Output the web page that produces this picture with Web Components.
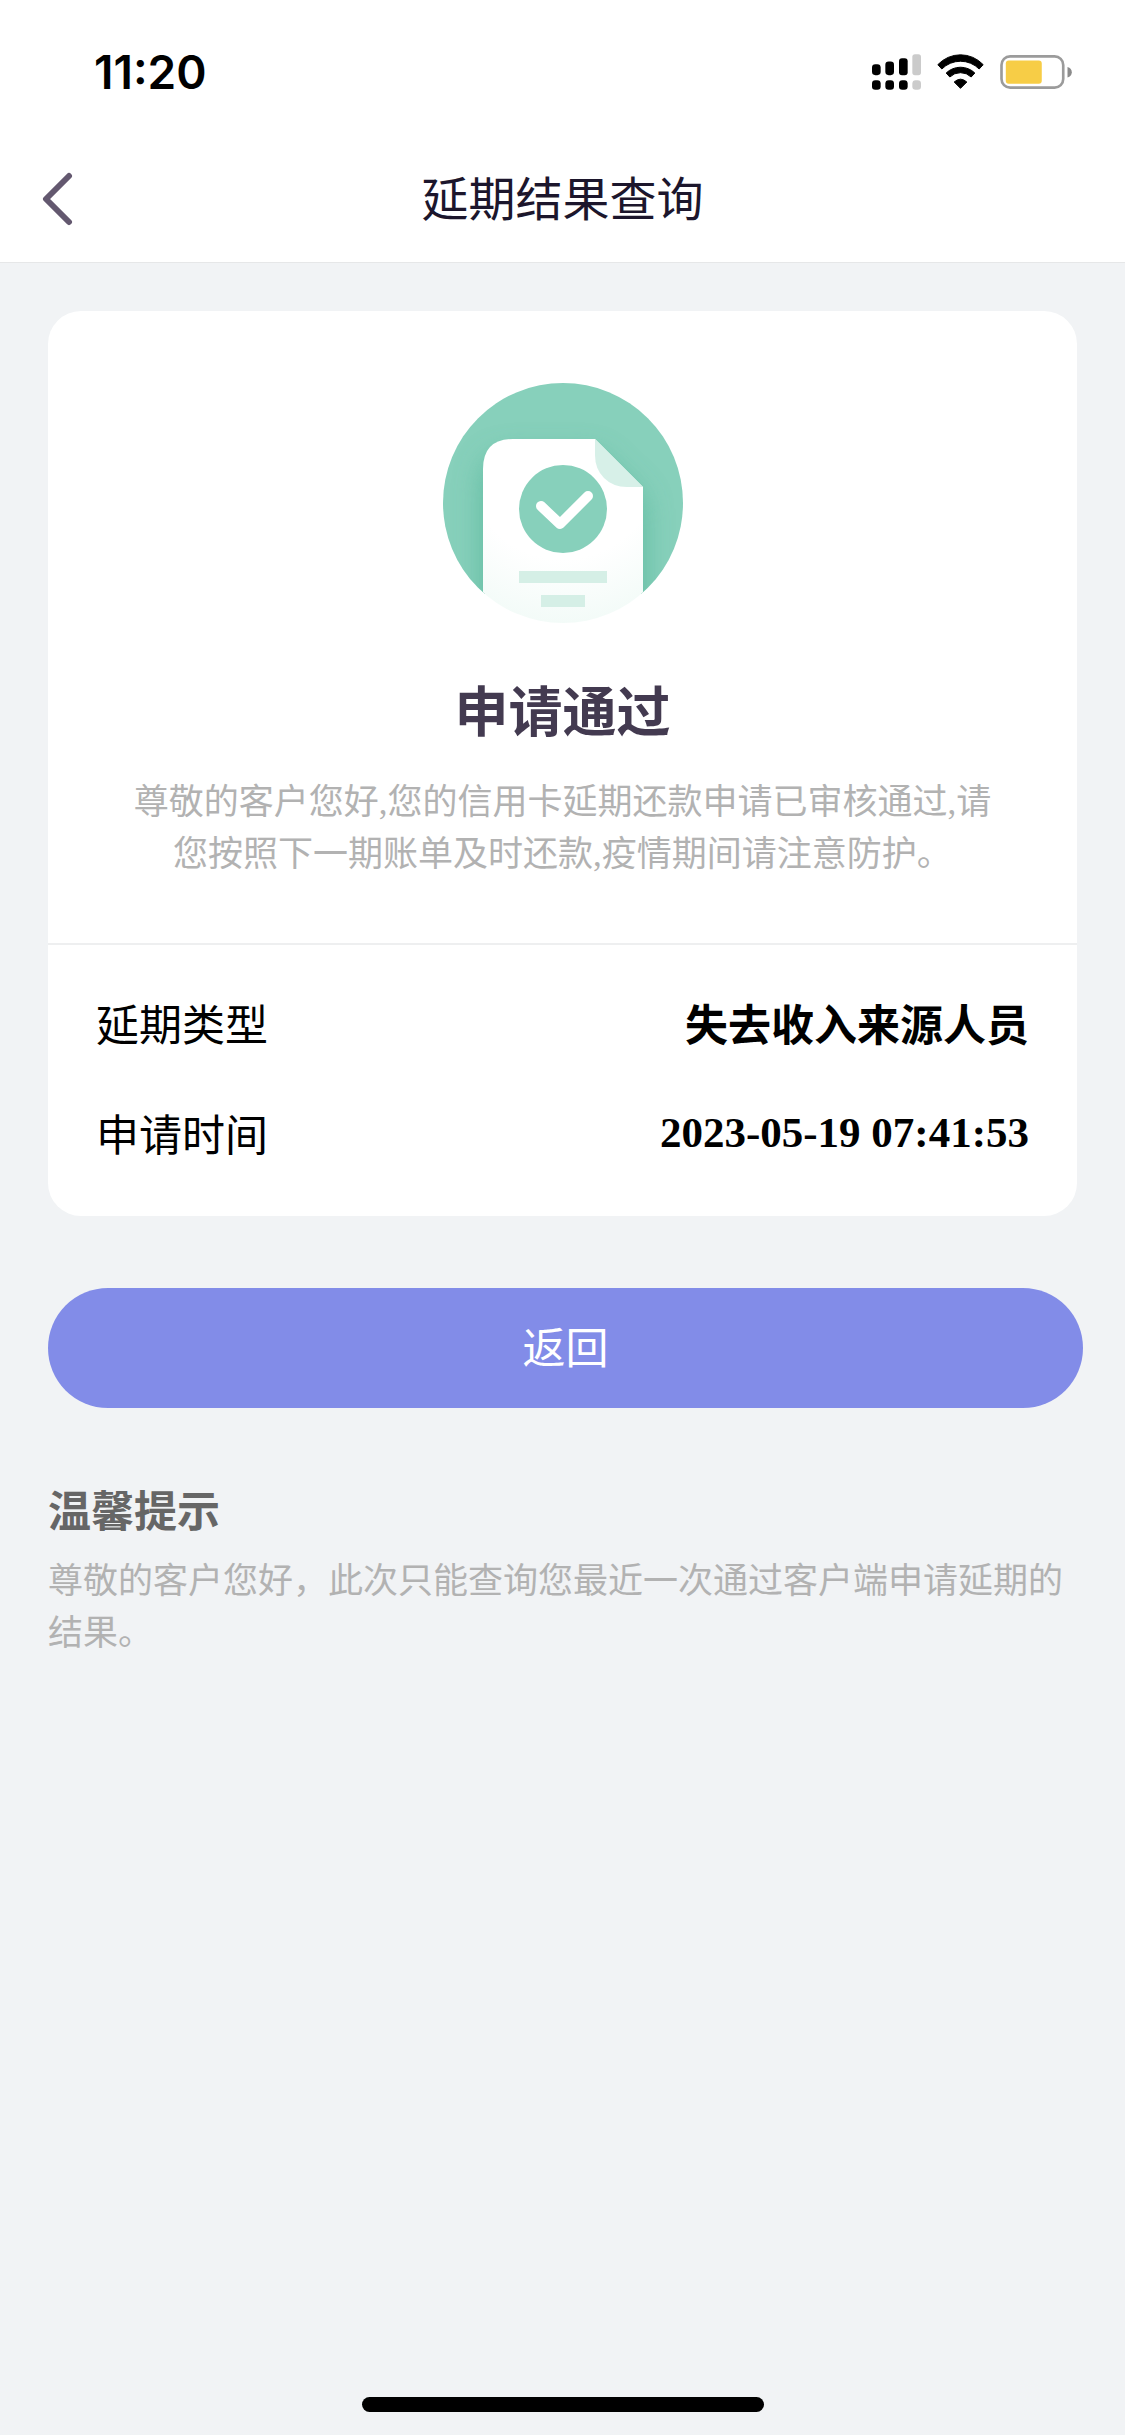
<!DOCTYPE html>
<html lang="zh-CN">
<head>
<meta charset="utf-8">
<meta name="viewport" content="width=device-width, initial-scale=1">
<title>延期结果查询</title>
<style>
  body {
    margin: 0;
    background: #f1f3f5;
    --sans: "Noto Sans CJK SC", sans-serif;
    --mixed: "Liberation Serif", "Noto Sans CJK SC", serif;
    font-family: var(--sans);
    color: #000;
  }
</style>
</head>
<body>
<result-page>
  <status-bar slot="top" time="11:20"></status-bar>
  <nav-bar slot="top">延期结果查询</nav-bar>
  <result-card heading="申请通过">
    尊敬的客户您好,您的信用卡延期还款申请已审核通过,请您按照下一期账单及时还款,疫情期间请注意防护。
    <detail-row slot="details" label="延期类型">失去收入来源人员</detail-row>
    <detail-row slot="details" label="申请时间">2023-05-19 07:41:53</detail-row>
  </result-card>
  <pill-button>返回</pill-button>
  <tip-note heading="温馨提示">尊敬的客户您好，此次只能查询您最近一次通过客户端申请延期的结果。</tip-note>
</result-page>

<script>
const define = (name, render) => customElements.define(name, class extends HTMLElement {
  constructor() {
    super();
    this.attachShadow({ mode: "open" }).innerHTML = render(this);
  }
});

define("result-page", () => `
  <style>
    :host { display: flex; flex-direction: column; min-height: 100vh; }
    header { background: #fff; border-bottom: 1px solid #e6e7e8; }
    main { flex: 1; padding: 48px; }
    footer { display: flex; justify-content: center; padding-bottom: 23px; }
    .indicator { width: 402px; height: 15px; border-radius: 8px; background: #000; }
  </style>
  <header><slot name="top"></slot></header>
  <main><slot></slot></main>
  <footer><div class="indicator"></div></footer>
`);

define("status-bar", el => `
  <style>
    :host { display: flex; align-items: center; justify-content: space-between;
            box-sizing: border-box; height: 136px; padding: 7px 53px 0 94px; }
    time { font: 600 46px/56px Inter, sans-serif; }
    .icons { display: flex; align-items: center; gap: 16px; }
    svg { display: block; }
  </style>
  <time>${el.getAttribute("time")}</time>
  <div class="icons">
    <svg width="49" height="36" viewBox="0 0 147 107" aria-hidden="true">
      <rect x="0" y="30" width="26" height="33" rx="10"/>
      <rect x="40" y="22" width="26" height="41" rx="10"/>
      <rect x="81" y="12" width="26" height="51" rx="9"/>
      <rect x="121" y="0" width="26" height="63" rx="8" fill="#cbcbcb"/>
      <rect x="0" y="78" width="26" height="29" rx="10"/>
      <rect x="40" y="78" width="26" height="29" rx="10"/>
      <rect x="81" y="78" width="26" height="29" rx="10"/>
      <rect x="121" y="78" width="26" height="29" rx="10" fill="#cbcbcb"/>
    </svg>
    <svg width="47" height="35" viewBox="0 0 140 105" stroke="#000" stroke-width="3" stroke-linejoin="round" aria-hidden="true">
      <path d="M2 32A93 93 0 0 1 138 32L126 45A79 79 0 0 0 14 45Z"/>
      <path d="M27 57A62 62 0 0 1 113 57L102 69A46 46 0 0 0 38 69Z"/>
      <path d="M51 84Q70 67 89 84L70 103Z"/>
    </svg>
    <svg width="72" height="34" viewBox="0 0 217 103" aria-hidden="true">
      <rect x="4" y="4" width="187" height="95" rx="26" fill="none" stroke="#9b9b9b" stroke-width="8"/>
      <rect x="17" y="17" width="109" height="70" rx="9" fill="#f7cd46"/>
      <path d="M204 36Q217 40 217 52T204 68Z" fill="#8b8b8b"/>
    </svg>
  </div>
`);

define("nav-bar", () => `
  <style>
    :host { display: grid; grid-template-columns: 120px 1fr 120px; align-items: center; height: 126px; }
    button { justify-self: start; padding: 24px 42px; border: 0; background: none; }
    svg { display: block; }
    h1 { margin: 0; padding-bottom: 6px; text-align: center; font-size: 47px; font-weight: 400; line-height: 60px; color: #1c162c; }
  </style>
  <button type="button" aria-label="返回上一页">
    <svg width="31" height="54" viewBox="0 0 31 54" fill="none" stroke="#63586f" stroke-width="6" stroke-linecap="round" stroke-linejoin="round">
      <path d="M27 4L4 27L27 50"/>
    </svg>
  </button>
  <h1><slot></slot></h1>
`);

define("approved-badge", () => `
  <style>:host { display: block; } svg { display: block; }</style>
  <svg width="240" height="240" viewBox="0 0 240 240" role="img" aria-label="已通过">
    <defs>
      <clipPath id="disc"><circle cx="120" cy="120" r="120"/></clipPath>
      <clipPath id="back"><rect width="240" height="211"/></clipPath>
      <filter id="soft" x="-40%" y="-40%" width="180%" height="180%"><feGaussianBlur stdDeviation="15"/></filter>
      <radialGradient id="paper" gradientUnits="userSpaceOnUse" cx="120" cy="80" r="160">
        <stop offset=".6" stop-color="#fff"/><stop offset="1" stop-color="#f3fbf8"/>
      </radialGradient>
    </defs>
    <g clip-path="url(#disc)">
      <g clip-path="url(#back)">
        <rect width="240" height="240" fill="#87d0bb"/>
        <path d="M40 280V102Q40 72 70 72H152L200 118V280Z" fill="#4fb397" opacity=".75" filter="url(#soft)"/>
      </g>
      <path d="M40 240V86Q40 56 70 56H152L200 104V240Z" fill="url(#paper)"/>
      <path d="M152 56V72Q152 86 161 95T184 104H200Z" fill="#d7f0e8"/>
      <circle cx="120" cy="126" r="44" fill="#87d0bb"/>
      <path d="M98 123L117 141L145 113" fill="none" stroke="#fff" stroke-width="10" stroke-linecap="round" stroke-linejoin="round"/>
      <rect x="76" y="188" width="88" height="12" fill="#d5efe6"/>
      <rect x="98" y="212" width="44" height="12" fill="#d5efe6"/>
    </g>
  </svg>
`);

define("result-card", el => `
  <style>
    :host { display: block; background: #fff; border-radius: 33px; }
    .summary { display: flex; flex-direction: column; align-items: center;
               padding: 72px 72px 62px; border-bottom: 2px solid #eeeff0; }
    h2 { margin: 56px 0 38px; font-size: 54px; line-height: 60px; font-weight: 700; color: #433a50; }
    p { margin: 0; text-align: center; font: 35px/52px var(--mixed); color: #b2b2b2; }
    .details { display: flex; flex-direction: column; gap: 48px; padding: 46px 48px 53px; }
  </style>
  <section class="summary">
    <approved-badge></approved-badge>
    <h2>${el.getAttribute("heading")}</h2>
    <p><slot></slot></p>
  </section>
  <section class="details"><slot name="details"></slot></section>
`);

define("detail-row", el => `
  <style>
    :host { display: flex; align-items: center; justify-content: space-between; font-size: 43px; }
    .value { font-family: var(--mixed); font-weight: 700; }
  </style>
  <span>${el.getAttribute("label")}</span>
  <span class="value"><slot></slot></span>
`);

define("pill-button", () => `
  <style>
    :host { display: block; margin: 72px -6px 0 0; }
    button { display: block; width: 100%; height: 120px; border: 0; border-radius: 60px; padding: 0 0 6px;
             background: #828ce8; color: #fff; font: 43px/60px var(--sans); }
  </style>
  <button type="button"><slot></slot></button>
`);

define("tip-note", el => `
  <style>
    :host { display: block; margin-top: 70px; }
    h3 { margin: 0 0 18px; font-size: 43px; line-height: 60px; font-weight: 700; color: #666; }
    p { margin: 0; font: 35px/52px var(--mixed); color: #b2b2b2; }
  </style>
  <h3>${el.getAttribute("heading")}</h3>
  <p><slot></slot></p>
`);
</script>
</body>
</html>
